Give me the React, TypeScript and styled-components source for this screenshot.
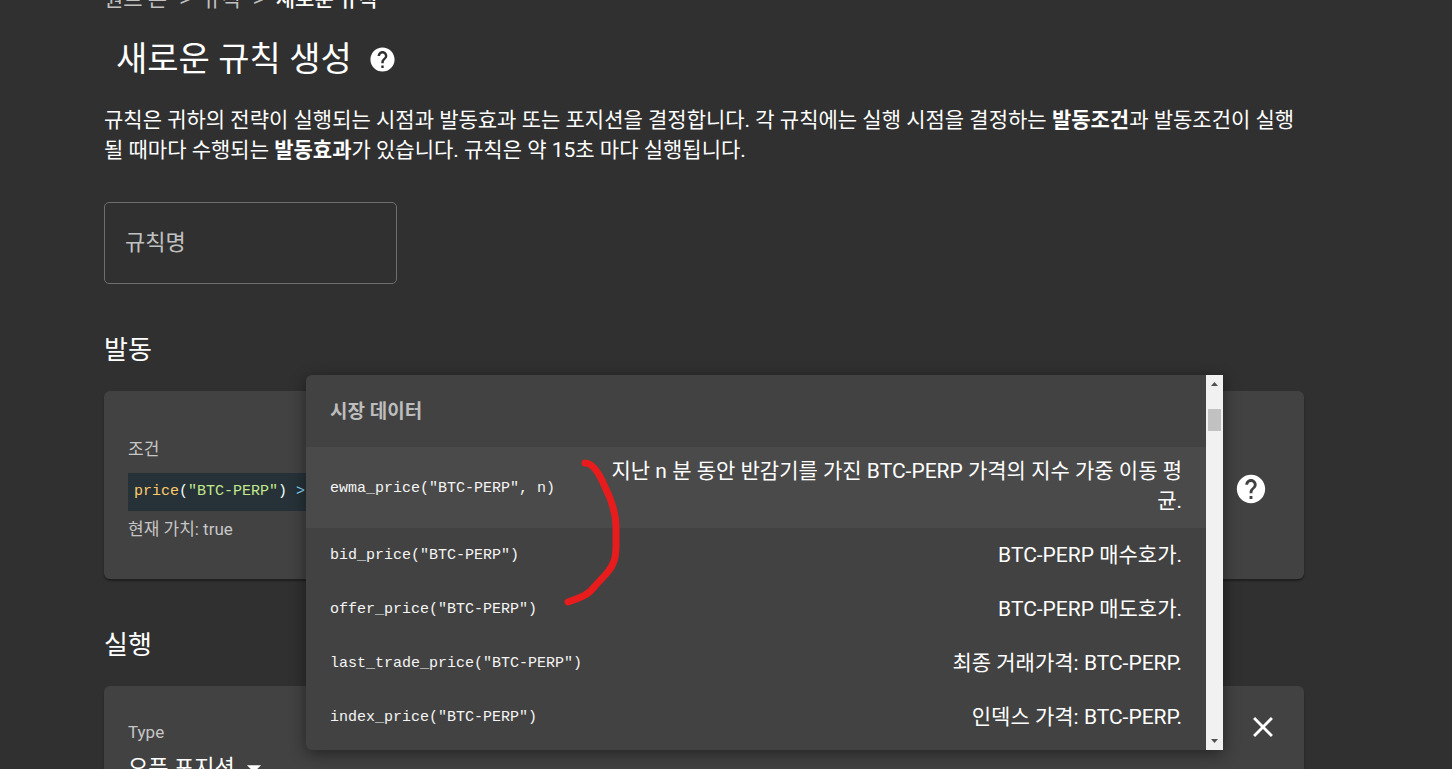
import React from 'react';
import styled, { createGlobalStyle } from 'styled-components';

const GlobalStyle = createGlobalStyle`
  *, *::before, *::after { box-sizing: border-box; }
  body {
    margin: 0;
    background: #303030;
    color: #fff;
    font-family: Roboto, "Noto Sans CJK KR", sans-serif;
    font-size: 21px;
    line-height: 30px;
  }
`;

const Viewport = styled.div`
  height: 100vh;
  overflow: hidden;
`;

const Page = styled.main`
  max-width: 1304px;
  padding-left: 104px;
`;

const Breadcrumbs = styled.nav`
  display: flex;
  gap: 12px;
  margin-top: -16px;
  color: #c1c1c1;
`;

const Crumb = styled.a`
  color: ${({ 'aria-current': current }) => (current ? '#fff' : 'inherit')};
  font-weight: ${({ 'aria-current': current }) => (current ? 500 : 400)};
  text-decoration: none;
`;

const TitleRow = styled.header`
  display: flex;
  align-items: center;
  gap: 16px;
  margin-top: 25px;
  padding-left: 12px;
`;

const Title = styled.h1`
  margin: 0;
  font-size: 34px;
  font-weight: 400;
  line-height: 40px;
`;

const IconButton = styled.button`
  display: flex;
  padding: 0;
  border: 0;
  background: none;
  color: #fff;
  cursor: pointer;
`;

const Intro = styled.p`
  margin: 26px 0 37px;
`;

const NameInput = styled.input`
  display: block;
  width: 293px;
  height: 82px;
  padding: 0 20px 2px;
  border: 1px solid #6e6e6e;
  border-radius: 5px;
  background: transparent;
  color: #fff;
  font: inherit;
  font-size: 22px;
  &::placeholder { color: #c1c1c1; opacity: 1; }
`;

const SectionTitle = styled.h2`
  margin: 46px 0 21px;
  font-size: 26px;
  font-weight: 400;
  line-height: 40px;
`;

const Card = styled.section<{ $top: number; $align: string }>`
  position: relative;
  display: flex;
  justify-content: space-between;
  align-items: ${({ $align }) => $align};
  padding: ${({ $top }) => $top}px 24px 38px;
  border-radius: 6px;
  background: #424242;
  box-shadow: 0 2px 2px rgba(0, 0, 0, 0.35);
`;

const CardBody = styled.div<{ $top?: number }>`
  display: flex;
  flex: 1;
  flex-direction: column;
  padding-top: ${({ $top = 0 }) => $top}px;
`;

const Label = styled.label`
  color: #c6c6c6;
  font-size: 17px;
  line-height: 24px;
`;

const Editor = styled.code`
  margin: 12px 0 6px;
  padding: 4px 6px;
  background: #263238;
  font-family: "Liberation Mono", monospace;
  font-size: 15px;
`;

const Token = styled.span<{ $color: string }>`
  color: ${({ $color }) => $color};
`;

const CardActions = styled.div<{ $inset: number }>`
  padding: 0 ${({ $inset }) => $inset}px;
`;

const SelectBox = styled.div`
  display: flex;
  align-items: center;
  margin-top: 7px;
`;

const Select = styled.select`
  appearance: none;
  padding: 0;
  border: 0;
  background: transparent;
  color: #fff;
  font: inherit;
  font-size: 22px;
  line-height: 32px;
`;

const Arrow = styled.svg`
  margin-left: 2px;
  pointer-events: none;
`;

const Popup = styled.div`
  position: absolute;
  z-index: 2;
  top: -16px;
  left: 202px;
  right: 81px;
  display: flex;
  height: 375px;
  border-radius: 6px 0 0 6px;
  background: #424242;
  box-shadow: 0 4px 16px rgba(0, 0, 0, 0.45);
`;

const Options = styled.div`
  flex: 1;
  overflow: hidden;
`;

const GroupTitle = styled.h3`
  margin: 0;
  padding: 22px 24px 20px;
  color: #bdbdbd;
  font-size: 19px;
  font-weight: 700;
`;

const Table = styled.table`
  width: 100%;
  border-collapse: collapse;
  table-layout: fixed;
`;

const Option = styled.tr<{ $active: boolean }>`
  background: ${({ $active }) => ($active ? '#4a4a4a' : 'transparent')};
`;

const CodeCell = styled.td`
  padding: 13px 0 11px 24px;
  color: #f5f5f5;
  font-family: "Liberation Mono", monospace;
  font-size: 15px;
  white-space: nowrap;
`;

const TextCell = styled.td<{ $active: boolean }>`
  width: 600px;
  padding: ${({ $active }) => ($active ? '9px 24px 12px 0' : '12px 24px 12px 0')};
  color: #fff;
  text-align: right;
`;

const ScrollTrack = styled.div`
  display: flex;
  flex-direction: column;
  align-items: center;
  width: 17px;
  padding: 7px 0;
  background: #f1f1f1;
`;

const ScrollThumb = styled.div`
  width: 13px;
  height: 22px;
  margin: 23px 0 auto;
  background: #c1c1c1;
`;

const Stroke = styled.svg`
  position: absolute;
  top: 80px;
  left: 250px;
  pointer-events: none;
`;

const HelpIcon = ({ size }: { size: number }) => (
  <svg width={size} height={size} viewBox="0 0 24 24" fill="currentColor" aria-hidden="true">
    <path d="M12 2C6.48 2 2 6.48 2 12s4.48 10 10 10 10-4.48 10-10S17.52 2 12 2zm1 17h-2v-2h2v2zm2.07-7.75l-.9.92C13.45 12.9 13 13.5 13 15h-2v-.5c0-1.1.45-2.1 1.17-2.83l1.24-1.26c.37-.36.59-.86.59-1.41 0-1.1-.9-2-2-2s-2 .9-2 2H8c0-2.21 1.79-4 4-4s4 1.79 4 4c0 .88-.36 1.68-.93 2.25z" />
  </svg>
);

const CloseIcon = () => (
  <svg width="34" height="34" viewBox="0 0 24 24" fill="currentColor" aria-hidden="true">
    <path d="M19 6.41L17.59 5 12 10.59 6.41 5 5 6.41 10.59 12 5 17.59 6.41 19 12 13.41 17.59 19 19 17.59 13.41 12z" />
  </svg>
);

const variables = [
  { code: 'ewma_price("BTC-PERP", n)', text: '지난 n 분 동안 반감기를 가진 BTC-PERP 가격의 지수 가중 이동 평균.' },
  { code: 'bid_price("BTC-PERP")', text: 'BTC-PERP 매수호가.' },
  { code: 'offer_price("BTC-PERP")', text: 'BTC-PERP 매도호가.' },
  { code: 'last_trade_price("BTC-PERP")', text: '최종 거래가격: BTC-PERP.' },
  { code: 'index_price("BTC-PERP")', text: '인덱스 가격: BTC-PERP.' },
];

const VariablePopup = () => (
  <Popup>
    <Options>
      <GroupTitle>시장 데이터</GroupTitle>
      <Table>
        <tbody>
          {variables.map((v, i) => (
            <Option key={v.code} $active={i === 0}>
              <CodeCell>{v.code}</CodeCell>
              <TextCell $active={i === 0}>{v.text}</TextCell>
            </Option>
          ))}
        </tbody>
      </Table>
    </Options>
    <ScrollTrack>
      <svg width="7" height="4" viewBox="0 0 7 4" fill="#505050"><path d="M0 4L3.5 0 7 4z" /></svg>
      <ScrollThumb />
      <svg width="7" height="4" viewBox="0 0 7 4" fill="#505050"><path d="M0 0L3.5 4 7 0z" /></svg>
    </ScrollTrack>
    <Stroke width="70" height="160" viewBox="0 0 70 160" fill="none" stroke="#e81c1c" strokeWidth="7" strokeLinecap="round" strokeLinejoin="round">
      <path d="M29 8C37 8 44 20 49 32C57 48 60 60 60 72V90C60 103 58 110 51 118L39 131C35 136 31 139 29 140C24 143 17 145 12 147" />
    </Stroke>
  </Popup>
);

export default function App() {
  return (
    <Viewport>
      <GlobalStyle />
      <Page>
        <Breadcrumbs>
          <Crumb href="#quant">퀀트 존</Crumb>
          <span>&gt;</span>
          <Crumb href="#rules">규칙</Crumb>
          <span>&gt;</span>
          <Crumb href="#new" aria-current="page">새로운 규칙</Crumb>
        </Breadcrumbs>
        <TitleRow>
          <Title>새로운 규칙 생성</Title>
          <IconButton aria-label="도움말"><HelpIcon size={29} /></IconButton>
        </TitleRow>
        <Intro>
          규칙은 귀하의 전략이 실행되는 시점과 발동효과 또는 포지션을 결정합니다. 각 규칙에는 실행 시점을 결정하는{' '}
          <b>발동조건</b>과 발동조건이 실행될 때마다 수행되는 <b>발동효과</b>가 있습니다. 규칙은 약 15초 마다 실행됩니다.
        </Intro>
        <NameInput aria-label="규칙명" placeholder="규칙명" />

        <SectionTitle>발동</SectionTitle>
        <Card $top={46} $align="center">
          <CardBody>
            <Label as="span">조건</Label>
            <Editor>
              <Token $color="#ffcb6b">price</Token>
              <Token $color="#eeffff">(</Token>
              <Token $color="#c3e88d">"BTC-PERP"</Token>
              <Token $color="#eeffff">)</Token>{' '}
              <Token $color="#89ddff">&gt;</Token>
            </Editor>
            <Label as="span">현재 가치: true</Label>
          </CardBody>
          <CardActions $inset={12}>
            <IconButton aria-label="조건 도움말"><HelpIcon size={34} /></IconButton>
          </CardActions>
          <VariablePopup />
        </Card>

        <SectionTitle>실행</SectionTitle>
        <Card $top={24} $align="flex-start">
          <CardBody $top={10}>
            <Label htmlFor="action-type">Type</Label>
            <SelectBox>
              <Select id="action-type">
                <option>오픈 포지션</option>
              </Select>
              <Arrow width="34" height="34" viewBox="0 0 24 24" fill="#fff"><path d="M7 10l5 5 5-5z" /></Arrow>
            </SelectBox>
          </CardBody>
          <CardActions $inset={0}>
            <IconButton aria-label="삭제"><CloseIcon /></IconButton>
          </CardActions>
        </Card>
      </Page>
    </Viewport>
  );
}
